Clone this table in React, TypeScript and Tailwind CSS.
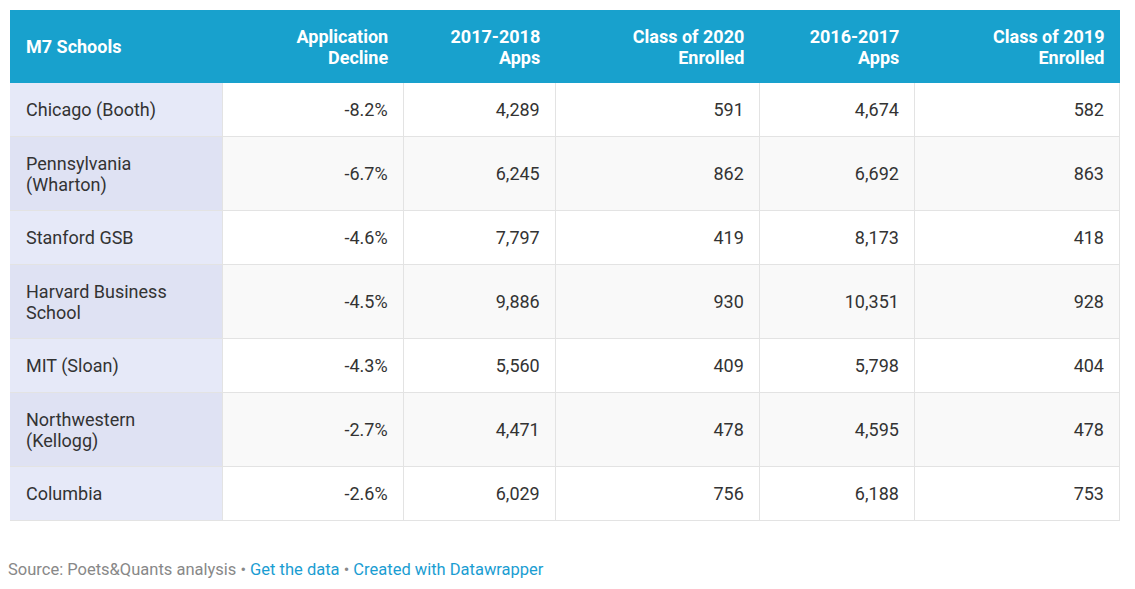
const rows: [string, string, string, string, string, string][] = [
  ["Chicago (Booth)", "-8.2%", "4,289", "591", "4,674", "582"],
  ["Pennsylvania (Wharton)", "-6.7%", "6,245", "862", "6,692", "863"],
  ["Stanford GSB", "-4.6%", "7,797", "419", "8,173", "418"],
  ["Harvard Business School", "-4.5%", "9,886", "930", "10,351", "928"],
  ["MIT (Sloan)", "-4.3%", "5,560", "409", "5,798", "404"],
  ["Northwestern (Kellogg)", "-2.7%", "4,471", "478", "4,595", "478"],
  ["Columbia", "-2.6%", "6,029", "756", "6,188", "753"],
]

const widths = ["w-[212px]", "w-[181px]", "w-[152px]", "w-[204px]", "w-[155px]", "w-[205px]"]

export default function App() {
  return (
    <div className="bg-white min-h-[589px] pt-[10px] pl-[10px] font-['Roboto',sans-serif] text-[#333]">
      <table className="border-collapse table-fixed w-[1110px] text-[18px] leading-[21px]">
        <thead>
          <tr className="bg-[#18a1cd] text-white font-bold h-[73px]">
            <th className={`${widths[0]} text-left px-4 align-middle`}>M7 Schools</th>
            <th className={`${widths[1]} text-right px-[15px] align-middle`}>Application<br />Decline</th>
            <th className={`${widths[2]} text-right px-[15px] align-middle`}>2017-2018<br />Apps</th>
            <th className={`${widths[3]} text-right px-[15px] align-middle`}>Class of 2020<br />Enrolled</th>
            <th className={`${widths[4]} text-right px-[15px] align-middle`}>2016-2017<br />Apps</th>
            <th className={`${widths[5]} text-right px-[15px] align-middle`}>Class of 2019<br />Enrolled</th>
          </tr>
        </thead>
        <tbody>
          {rows.map((r, i) => {
            const odd = i % 2 === 1
            return (
              <tr key={r[0]} className={odd ? "bg-[#f9f9f9]" : "bg-white"}>
                <td className={`px-4 pt-[16.25px] pb-[15.25px] border-b border-[#e3e3e3] text-left ${odd ? "bg-[#dfe2f3]" : "bg-[#e6e9f8]"}`}>
                  <span className="block max-w-[170px]">{r[0]}</span>
                </td>
                {r.slice(1).map((v, j) => (
                  <td
                    key={j}
                    className={`px-[15px] pt-[16.25px] pb-[15.25px] text-right border-b border-l border-[#e3e3e3] ${j === 4 ? "border-r" : ""}`}
                  >
                    {v}
                  </td>
                ))}
              </tr>
            )
          })}
        </tbody>
      </table>
      <div className="mt-[37px] -ml-[2px] text-[16.5px] text-[#888]">
        Source: Poets&amp;Quants analysis •{" "}
        <span className="text-[#1a9dd2]">Get the data</span> •{" "}
        <span className="text-[#1a9dd2]">Created with Datawrapper</span>
      </div>
    </div>
  )
}
